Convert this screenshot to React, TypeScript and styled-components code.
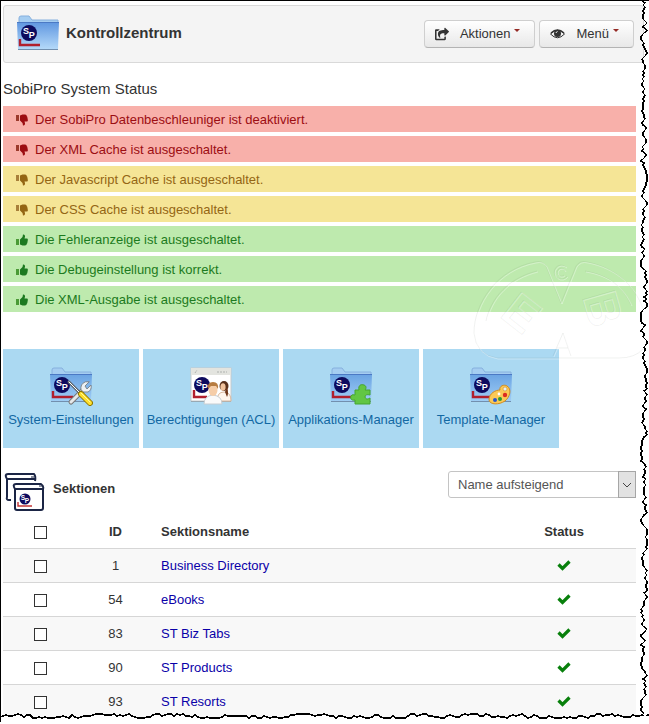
import React from "react";
import styled, { createGlobalStyle } from "styled-components";
import { FaShareSquare } from "react-icons/fa";

const GlobalStyle = createGlobalStyle`
  *, *::before, *::after { box-sizing: border-box; }
  body {
    margin: 0;
    background: #fff;
    color: #333;
    font-family: "Liberation Sans", Arial, sans-serif;
    font-size: 13px;
    line-height: 18px;
  }
`;

const Page = styled.main`
  position: relative;
  overflow: hidden;
  padding: 4px 13px 4px 2px;
  border-top: 1px solid #000;
  border-left: 1px solid #000;
`;

const Toolbar = styled.header`
  display: flex;
  align-items: center;
  gap: 4px;
  height: 58px;
  margin-right: -8px;
  padding: 0 9px 0 12px;
  background: #f4f4f4;
  border: 1px solid #d9d9d9;
  border-radius: 3px;
`;

const ToolbarTitle = styled.h1`
  flex: 1;
  margin: 0 0 2px 2px;
  font-size: 15px;
  line-height: 20px;
`;

const ToolbarButton = styled.button`
  display: flex;
  align-items: center;
  height: 28px;
  padding: 0 14px 0 10px;
  border: 1px solid #cfcfcf;
  border-bottom-color: #b3b3b3;
  border-radius: 4px;
  background: linear-gradient(#fff, #e8e8e8);
  color: #333;
  font: inherit;
  cursor: pointer;

  svg { margin-right: 11px; }
`;

const Caret = styled.span`
  align-self: flex-start;
  margin: 8px 0 0 4px;
  border: 3px solid transparent;
  border-top-color: #942a25;
  border-bottom: 0;
`;

const StatusTitle = styled.h2`
  margin: 16px 0 7px;
  font-size: 15px;
  font-weight: 400;
  line-height: 20px;
`;

const StatusList = styled.ul`
  display: grid;
  gap: 4px;
  margin: 0;
  padding: 0;
  list-style: none;
`;

type Level = "error" | "warning" | "ok";

const levelColors: Record<Level, { back: string; text: string; cuff: string }> = {
  error: { back: "#f8b0aa", text: "#9c0d12", cuff: "#9c3a2c" },
  warning: { back: "#f5e596", text: "#946614", cuff: "#a8803a" },
  ok: { back: "#beeaae", text: "#1c7a20", cuff: "#4b9a36" },
};

const StatusRow = styled.li<{ $level: Level }>`
  display: flex;
  align-items: center;
  gap: 7px;
  height: 26px;
  padding: 1px 0 0 13px;
  background: ${(p) => levelColors[p.$level].back};
  color: ${(p) => levelColors[p.$level].text};
`;

const Tiles = styled.nav`
  display: grid;
  grid-template-columns: repeat(auto-fill, 136px);
  gap: 4px;
  margin-top: 37px;
`;

const Tile = styled.a`
  display: flex;
  flex-direction: column;
  align-items: center;
  gap: 5px;
  height: 99px;
  padding-top: 17px;
  background: #abd9f2;
  color: #1268a3;
  text-decoration: none;
  white-space: nowrap;
`;

const SectionHead = styled.div`
  display: flex;
  align-items: center;
  height: 42px;
  margin-top: 23px;
`;

const SectionTitle = styled.h2`
  flex: 1;
  margin: 0 0 6px 8px;
  font-size: 13px;
  line-height: 18px;
`;

const SelectBox = styled.div`
  position: relative;
  width: 188px;
  height: 27px;
  margin-bottom: 15px;
`;

const Select = styled.select`
  width: 100%;
  height: 100%;
  padding: 0 24px 0 9px;
  appearance: none;
  border: 1px solid #c4c4c4;
  border-radius: 3px;
  background: #fff;
  color: #555;
  font: inherit;
`;

const SelectArrow = styled.span`
  position: absolute;
  top: 0;
  right: 0;
  bottom: 0;
  display: grid;
  place-items: center;
  width: 18px;
  border: 1px solid #a6a6a6;
  background: #e2e2e2;
  pointer-events: none;
`;

const Table = styled.table`
  width: 100%;
  table-layout: fixed;
  border-collapse: collapse;
`;

const HeadCell = styled.th<{ $width?: number; $left?: boolean }>`
  width: ${(p) => (p.$width ? `${p.$width}px` : "auto")};
  height: 35px;
  padding: 3px 8px 0;
  text-align: ${(p) => (p.$left ? "left" : "center")};
`;

const Row = styled.tr`
  border-top: 1px solid #d6d6d6;
  &:nth-child(odd) { background: #f8f8f8; }
`;

const Cell = styled.td<{ $left?: boolean }>`
  height: 34px;
  padding: 2px 8px 0;
  text-align: ${(p) => (p.$left ? "left" : "center")};

  svg { display: block; margin: 0 auto 3px; }
`;

const Check = styled.input`
  display: block;
  width: 13px;
  height: 13px;
  margin: 1px auto 0;
  appearance: none;
  border: 1px solid #333;
  background: #fff;
  &:checked { box-shadow: inset 0 0 0 2px #fff; background: #333; }
`;

const SectionLink = styled.a`
  color: #0a00a8;
  text-decoration: none;
`;

const TornRight = styled.svg`
  position: absolute;
  top: 0;
  right: 0;
  width: 14px;
  height: 2000px;
`;

const TornBottom = styled.svg`
  position: absolute;
  left: -1px;
  bottom: 0;
  width: 3000px;
  height: 12px;
`;

const TornCorner = styled.span`
  position: absolute;
  right: 0;
  bottom: 0;
  width: 7px;
  height: 6px;
  background: #fff;
`;

const WatermarkArt = styled.svg`
  position: absolute;
  top: 250px;
  right: 0;
  width: 180px;
  height: 114px;
  pointer-events: none;
`;

/* Offsets of a ragged paper edge, one for every step along it. */
function tornOffsets(count: number, seed: number, reach: number, limit: number) {
  const out: number[] = [];
  let state = seed;
  let pos = 0;
  for (let i = 0; i < count; i++) {
    state = (state * 1103515245 + 12345) % 2147483648;
    const r = state / 2147483648 - 0.5;
    pos = Math.max(-limit, Math.min(limit, pos * 0.75 + r * reach));
    out.push(Math.round(pos));
  }
  return out;
}

const rightEdge = tornOffsets(1000, 41, 5, 3).map((d, i) => `${9 + d},${i * 2}`).join(" ");
const bottomEdge = tornOffsets(1000, 97, 4, 2).map((d, i) => `${i * 3},${6 + d}`).join(" ");

function TornPaper() {
  return (
    <>
      <TornRight viewBox="0 0 14 2000" aria-hidden="true">
        <polygon points={`14,0 ${rightEdge} 14,2000`} fill="#fff" />
        <polyline points={rightEdge} fill="none" stroke="#000" strokeWidth="1.4" shapeRendering="crispEdges" />
      </TornRight>
      <TornBottom viewBox="0 0 3000 12" aria-hidden="true">
        <polygon points={`0,12 ${bottomEdge} 3000,12`} fill="#fff" />
        <polyline points={bottomEdge} fill="none" stroke="#000" strokeWidth="1.6" shapeRendering="crispEdges" />
      </TornBottom>
      <TornCorner />
    </>
  );
}

function WatermarkLines() {
  return (
    <>
      <path d="M5 82C5 52 28 18 66 11Q73 9 77 15L92 52L107 15Q111 9 118 11C145 16 166 34 174 58M5 82Q7 104 28 107H150Q166 107 174 98" />
      <path d="M17 70C22 46 40 27 68 20M116 20C140 24 154 36 162 54" />
      <path d="M97 16A7 7 0 1 0 98 25M96 20A4 4 0 1 0 95 24" />
      <path d="M84 105L94 82L102 105M88 97H99" />
      <text x="-17" y="17" fontSize="48" fontWeight="700" transform="translate(53 62) rotate(38)">E</text>
      <text x="-18" y="17" fontSize="48" fontWeight="700" transform="translate(134 58) rotate(74)">B</text>
    </>
  );
}

function Watermark() {
  return (
    <WatermarkArt viewBox="0 0 180 114" fill="none" aria-hidden="true">
      <g stroke="#405040" strokeOpacity="0.08"><WatermarkLines /></g>
      <g stroke="#fff" strokeOpacity="0.35" transform="translate(1 1)"><WatermarkLines /></g>
    </WatermarkArt>
  );
}

function Badge({ x, y, r }: { x: number; y: number; r: number }) {
  return (
    <g transform={`translate(${x} ${y})`}>
      <circle r={r} fill="#0d0b5e" />
      <g fill="#fff" fontFamily="Liberation Sans, sans-serif" fontWeight="700" fontSize={r + 1} textAnchor="middle">
        <text x={-r * 0.38} y={r * 0.14}>S</text>
        <text x={r * 0.34} y={r * 0.66}>P</text>
      </g>
    </g>
  );
}

type Extra = "none" | "tools" | "puzzle" | "palette";

function Tools() {
  return (
    <g strokeLinecap="round">
      <path d="M22 36L35 23" stroke="#777" strokeWidth="5" />
      <path d="M22 36L35 23" stroke="#e5e8ea" strokeWidth="3" />
      <path d="M40 16L36 20L38 23L42 19Q43 24 39 26Q34 27 32 24Q31 18 36 16Z" fill="#eef1f3" stroke="#808890" />
      <path d="M20 16L32 28" stroke="#5e666d" strokeWidth="3" />
      <path d="M20 16L31 27" stroke="#fff" />
      <path d="M32 28L41 37" stroke="#8d7600" strokeWidth="6" />
      <path d="M32 28L41 37" stroke="#ffe02c" strokeWidth="4" />
      <path d="M32 27L41 36" stroke="#fff7a0" />
    </g>
  );
}

function Puzzle() {
  return (
    <path
      d="M26 24H30C29 19 32 18 35 19C38 20 37 23 36 24H41V29C38 28 36 29 36 31C37 34 39 33 41 32V38H26V34C22 35 21 32 22 30C23 28 25 29 26 29Z"
      fill="#62c643" stroke="#45a52e"
    />
  );
}

function Palette() {
  return (
    <g>
      <path d="M20 34C20 27 27 24 31 24C30 20 35 18 38 20C43 23 41 31 36 35C30 39 21 39 20 34Z" fill="#fbc957" stroke="#d38d20" />
      <circle cx="36" cy="23" r="2" fill="#e7f1f8" stroke="#d38d20" strokeWidth="0.6" />
      <circle cx="26" cy="34" r="2" fill="#2855c8" />
      <circle cx="31" cy="33" r="2" fill="#2a9a33" />
      <circle cx="36" cy="29" r="2.2" fill="#dc2c22" />
      <circle cx="30" cy="28" r="1.4" fill="#fff" />
    </g>
  );
}

function FolderIcon({ id, extra = "none", pale = false }: { id: string; extra?: Extra; pale?: boolean }) {
  return (
    <svg width="44" height="40" viewBox="0 0 44 40" aria-hidden="true">
      <defs>
        <linearGradient id={id} x1="0" y1="0" x2="0" y2="1">
          <stop offset="0" stopColor={pale ? "#6aa3e3" : "#5f96e0"} />
          <stop offset="1" stopColor={pale ? "#9fcdf5" : "#b4d9f9"} />
        </linearGradient>
      </defs>
      <path d="M3 9V4Q3 2 5 2H13L16 6H42V10H3Z" fill="#a5cdf1" stroke="#86b0de" />
      <path d="M1 8H43L42 35H2Z" fill={`url(#${id})`} />
      <path d="M1 8.5H43" stroke="#4b79c4" />
      <path d="M2 35.5H42" stroke="#728fae" />
      <path d="M4 25V31H24" fill="none" stroke="#b11f2d" strokeWidth="2.4" />
      <Badge x={13} y={19} r={8} />
      {extra === "tools" && <Tools />}
      {extra === "puzzle" && <Puzzle />}
      {extra === "palette" && <Palette />}
    </svg>
  );
}

function AccessIcon() {
  return (
    <svg width="44" height="40" viewBox="0 0 44 40" aria-hidden="true">
      <rect x="2" y="2" width="40" height="33" fill="#fff" stroke="#c5c9cb" />
      <rect x="2" y="2" width="40" height="7" fill="#e3e4df" />
      <path d="M6 7L8 4M28 6H38" stroke="#afb2af" strokeDasharray="2 1" />
      <path d="M2 35.5H42" stroke="#98a9b3" />
      <path d="M5 24V31H18" fill="none" stroke="#b11f2d" strokeWidth="2.4" />
      <Badge x={13} y={19} r={8} />
      <path d="M28 35Q28 26 35 26Q42 26 42 35Z" fill="#fff6ee" stroke="#d9b9a0" />
      <ellipse cx="35" cy="20" rx="4.5" ry="5" fill="#59311c" />
      <ellipse cx="34" cy="21" rx="2.6" ry="3.8" fill="#f1c39d" />
      <path d="M38 21Q40 27 38 31L36 26Z" fill="#6d3519" />
      <path d="M15 38Q15 30 24 29Q33 30 33 38Z" fill="#fafafa" stroke="#c8ced2" />
      <ellipse cx="24" cy="24" rx="4.5" ry="6" fill="#f5cda8" />
      <path d="M19 23Q18 16 24 16Q30 16 29 23L27 20H22Z" fill="#b77c40" />
    </svg>
  );
}

function SectionsIcon() {
  return (
    <svg width="42" height="40" viewBox="0 0 42 40" aria-hidden="true">
      <g fill="none" stroke="#1b2545" strokeWidth="2" strokeLinejoin="round">
        <path d="M8 28H6Q3 28 4 25V7Q1 2 5 2H31Q33 4 32 9M4 7H32" />
        <path d="M12 17Q9 12 13 12H38Q41 14 40 17V36Q40 38 38 38H14Q12 38 12 36Z" fill="#fff" />
        <path d="M12 17H40" />
      </g>
      <path d="M28 5H31M36 14H39" stroke="#1b2545" />
      <path d="M15 30V34H29" fill="none" stroke="#c53434" strokeWidth="1.4" />
      <Badge x={22} y={27} r={5.5} />
    </svg>
  );
}

function EyeIcon() {
  return (
    <svg width="15" height="14" viewBox="0 0 15 14" aria-hidden="true">
      <path d="M0.5 7Q7.5 -0.5 14.5 7Q7.5 14.5 0.5 7Z" fill="none" stroke="#333" />
      <circle cx="7.5" cy="6.5" r="3.5" fill="#333" />
      <path d="M6 6Q6 5 7.5 4.5" stroke="#fff" fill="none" />
      <path d="M1 6Q7.5 0 14 6" stroke="#333" strokeWidth="1.5" fill="none" />
    </svg>
  );
}

function ThumbIcon({ level }: { level: Level }) {
  const up = level === "ok";
  return (
    <svg width="12" height="12" viewBox="0 0 12 12" aria-hidden="true">
      <g transform={up ? undefined : "matrix(1 0 0 -1 0 12)"}>
        <path d="M0 5H3V11H0Z" fill={levelColors[level].cuff} />
        <path
          d="M4 5.500L6.500 3L7 0.500Q9.300 0.200 9 2.800L8.500 4.500H11.200Q12.200 5 11.700 6.300Q12 7 11.400 8Q11.600 9 10.800 9.700Q10.800 11.300 9 11.400H6.500L4 10.500Z"
          fill="currentColor"
        />
      </g>
    </svg>
  );
}

function CheckIcon() {
  return (
    <svg width="14" height="12" viewBox="0 0 14 12" role="img" aria-label="Aktiv">
      <path d="M1.500 5.500L5.500 9.500L12.500 2.500" fill="none" stroke="#08800c" strokeWidth="3.200" />
    </svg>
  );
}

const statuses: { level: Level; text: string }[] = [
  { level: "error", text: "Der SobiPro Datenbeschleuniger ist deaktiviert." },
  { level: "error", text: "Der XML Cache ist ausgeschaltet." },
  { level: "warning", text: "Der Javascript Cache ist ausgeschaltet." },
  { level: "warning", text: "Der CSS Cache ist ausgeschaltet." },
  { level: "ok", text: "Die Fehleranzeige ist ausgeschaltet." },
  { level: "ok", text: "Die Debugeinstellung ist korrekt." },
  { level: "ok", text: "Die XML-Ausgabe ist ausgeschaltet." },
];

const sections = [
  { id: 1, name: "Business Directory" },
  { id: 54, name: "eBooks" },
  { id: 83, name: "ST Biz Tabs" },
  { id: 90, name: "ST Products" },
  { id: 93, name: "ST Resorts" },
];

export default function App() {
  return (
    <>
      <GlobalStyle />
      <Page>
        <Toolbar>
          <FolderIcon id="folder-main" />
          <ToolbarTitle>Kontrollzentrum</ToolbarTitle>
          <ToolbarButton type="button">
            <FaShareSquare size={14} />Aktionen<Caret />
          </ToolbarButton>
          <ToolbarButton type="button">
            <EyeIcon />Menü<Caret />
          </ToolbarButton>
        </Toolbar>

        <StatusTitle>SobiPro System Status</StatusTitle>
        <StatusList>
          {statuses.map((s) => (
            <StatusRow key={s.text} $level={s.level}>
              <ThumbIcon level={s.level} />
              {s.text}
            </StatusRow>
          ))}
        </StatusList>

        <Tiles>
          <Tile href="#config"><FolderIcon id="folder-config" extra="tools" pale />System-Einstellungen</Tile>
          <Tile href="#acl"><AccessIcon />Berechtigungen (ACL)</Tile>
          <Tile href="#apps"><FolderIcon id="folder-apps" extra="puzzle" pale />Applikations-Manager</Tile>
          <Tile href="#templates"><FolderIcon id="folder-templates" extra="palette" pale />Template-Manager</Tile>
        </Tiles>

        <SectionHead>
          <SectionsIcon />
          <SectionTitle>Sektionen</SectionTitle>
          <SelectBox>
            <Select aria-label="Sortierung" defaultValue="asc">
              <option value="asc">Name aufsteigend</option>
              <option value="desc">Name absteigend</option>
            </Select>
            <SelectArrow>
              <svg width="10" height="6" viewBox="0 0 10 6" aria-hidden="true">
                <path d="M1 1L5 5L9 1" fill="none" stroke="#444" />
              </svg>
            </SelectArrow>
          </SelectBox>
        </SectionHead>

        <Table>
          <thead>
            <tr>
              <HeadCell $width={75}><Check type="checkbox" aria-label="Alle auswählen" /></HeadCell>
              <HeadCell $width={75}>ID</HeadCell>
              <HeadCell $left>Sektionsname</HeadCell>
              <HeadCell $width={144}>Status</HeadCell>
            </tr>
          </thead>
          <tbody>
            {sections.map((s) => (
              <Row key={s.id}>
                <Cell><Check type="checkbox" aria-label={s.name} /></Cell>
                <Cell>{s.id}</Cell>
                <Cell $left><SectionLink href={`#section-${s.id}`}>{s.name}</SectionLink></Cell>
                <Cell><CheckIcon /></Cell>
              </Row>
            ))}
          </tbody>
        </Table>

        <Watermark />
        <TornPaper />
      </Page>
    </>
  );
}
